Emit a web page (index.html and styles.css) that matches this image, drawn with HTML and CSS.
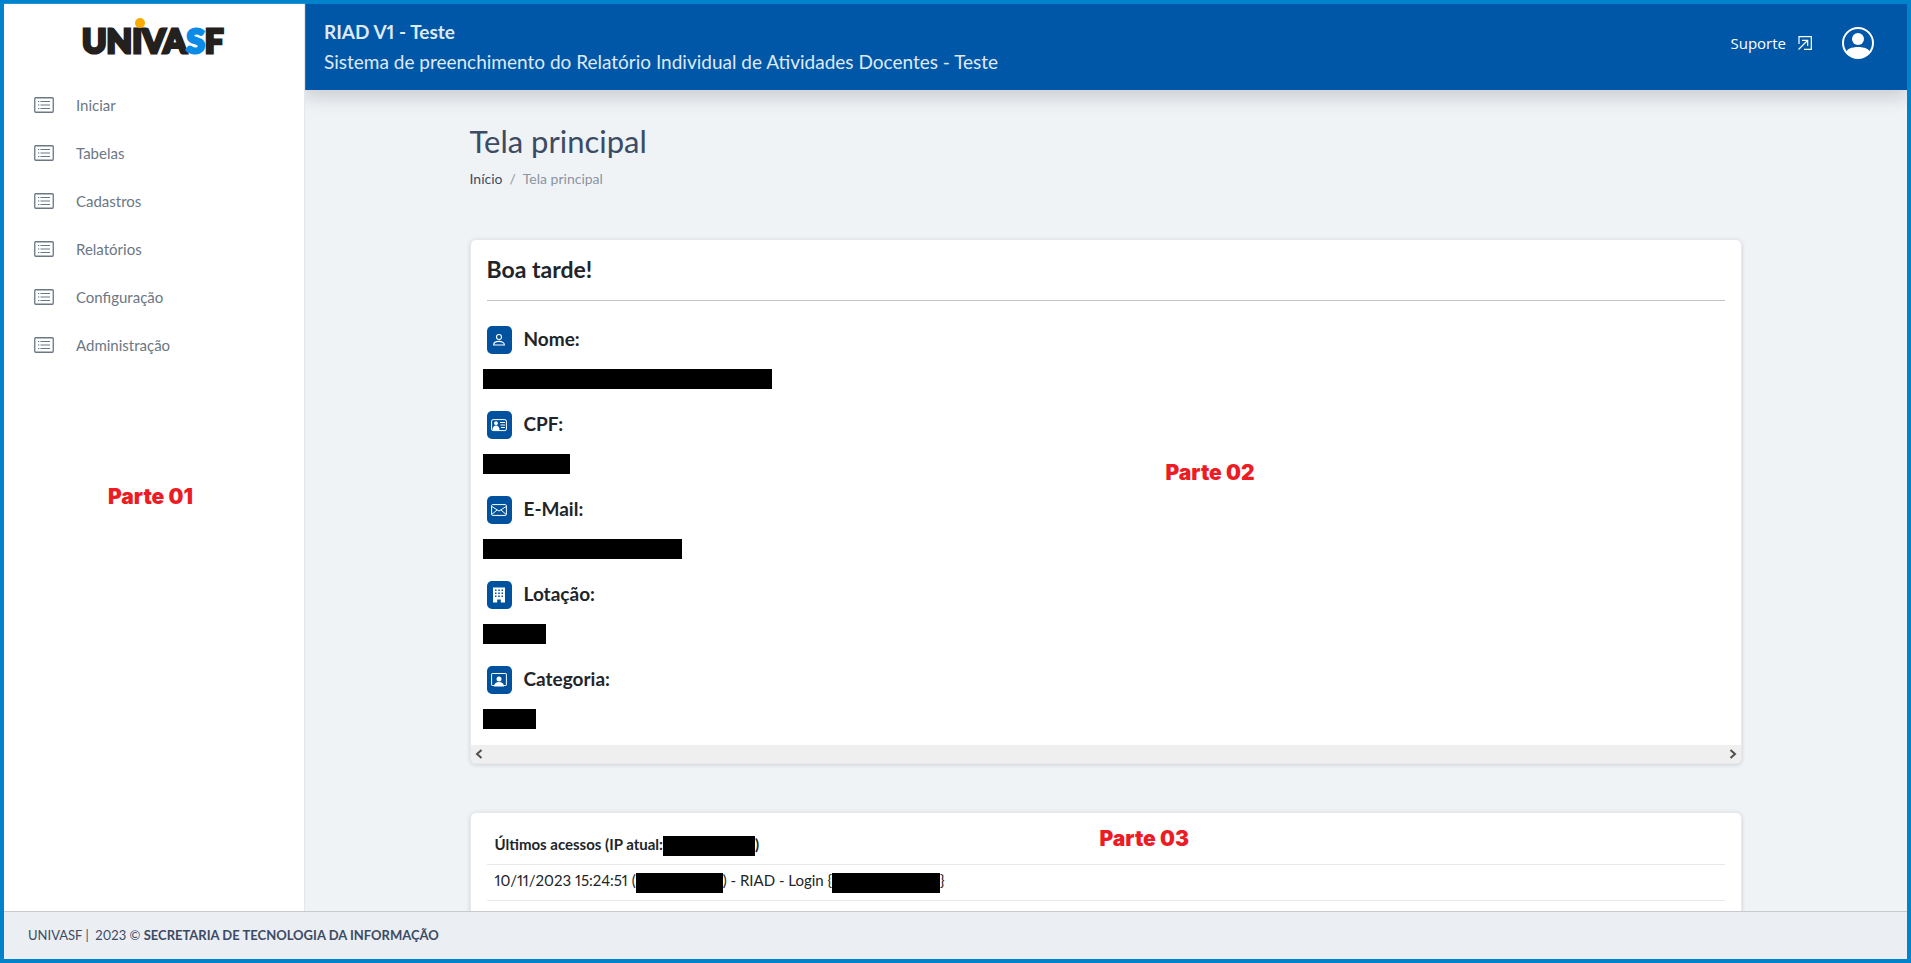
FILE: index.html
```html
<!DOCTYPE html>
<html lang="pt-BR">
<head>
<meta charset="utf-8">
<title>RIAD V1 - Teste</title>
<meta name="viewport" content="width=device-width, initial-scale=1">
<link rel="stylesheet" href="styles.css">
</head>
<body>
<svg class="defs" aria-hidden="true">
  <symbol id="i-list" viewBox="0 0 20 16">
    <rect x=".75" y=".75" width="18.5" height="14.5" rx="1" fill="none" stroke="currentColor" stroke-width="1.3"/>
    <path d="M4 4.5h1.3M4 8h1.3M4 11.5h1.3M6.5 4.5H16M6.5 8H16M6.5 11.5H16" stroke="currentColor" stroke-width="1.1"/>
  </symbol>
</svg>
<div class="app">
  <aside class="sidebar">
    <a class="brand" href="#" aria-label="UNIVASF">
      <svg width="146" height="40" viewBox="0 0 146 40">
        <text class="brand-text" x="1" y="35">UNIVA<tspan class="brand-s">S</tspan>F</text>
        <circle cx="59" cy="5" r="5" fill="#fbab00"/>
      </svg>
    </a>
    <nav class="menu">
      <a href="#"><svg class="menu-icon"><use href="#i-list"/></svg>Iniciar</a>
      <a href="#"><svg class="menu-icon"><use href="#i-list"/></svg>Tabelas</a>
      <a href="#"><svg class="menu-icon"><use href="#i-list"/></svg>Cadastros</a>
      <a href="#"><svg class="menu-icon"><use href="#i-list"/></svg>Relatórios</a>
      <a href="#"><svg class="menu-icon"><use href="#i-list"/></svg>Configuração</a>
      <a href="#"><svg class="menu-icon"><use href="#i-list"/></svg>Administração</a>
    </nav>
    <span class="note note-1">Parte 01</span>
  </aside>

  <div class="page">
    <header class="topbar">
      <div class="topbar-title">
        <strong>RIAD V1 - Teste</strong>
        <span>Sistema de preenchimento do Relatório Individual de Atividades Docentes - Teste</span>
      </div>
      <div class="topbar-actions">
        <a class="support" href="#">Suporte
          <svg width="14" height="14" viewBox="0 0 14 14" fill="none" stroke="currentColor" stroke-width="1.2"><path d="M1 8V.7h12.3v12.6H6M.5 13.5l9-9M4 4.3h5.7V10"/></svg>
        </a>
        <button class="avatar" type="button" aria-label="Perfil">
          <svg width="32" height="32" viewBox="0 0 32 32"><defs><clipPath id="face"><circle cx="16" cy="16" r="15"/></clipPath></defs><circle cx="16" cy="16" r="15" fill="none" stroke="#fff" stroke-width="2"/><circle cx="16" cy="12" r="6" fill="#fff"/><path clip-path="url(#face)" d="M4 26c0-4 6-6 12-6s12 2 12 6v6H4z" fill="#fff"/></svg>
        </button>
      </div>
    </header>

    <main class="content">
      <h1>Tela principal</h1>
      <nav class="crumbs" aria-label="Trilha"><a href="#">Início</a><span>/</span><span>Tela principal</span></nav>

      <section class="card profile">
        <div class="profile-body">
          <h2>Boa tarde!</h2>
          <dl>
            <div class="field">
              <dt><span class="badge"><svg viewBox="0 0 16 16" fill="none" stroke="currentColor" stroke-width="1.1"><circle cx="8" cy="5" r="2.5"/><path d="M2.6 13c0-2.2 2.2-3.6 5.4-3.6s5.4 1.4 5.4 3.6z"/></svg></span>Nome:</dt>
              <dd><span class="redacted w-name"></span></dd>
            </div>
            <div class="field">
              <dt><span class="badge"><svg viewBox="0 0 16 16" fill="none" stroke="currentColor"><rect x=".6" y="2.6" width="14.8" height="11" rx="1.5"/><circle cx="5" cy="6.2" r="1.9" fill="currentColor" stroke="none"/><path d="M1.5 13c0-3 1.5-4.5 3.5-4.500S8.500 10 8.500 13z" fill="currentColor" stroke="none"/><path d="M9 5.500h5M9.500 8h4.500M10 10.500h4"/></svg></span>CPF:</dt>
              <dd><span class="redacted w-cpf"></span></dd>
            </div>
            <div class="field">
              <dt><span class="badge"><svg viewBox="0 0 16 16" fill="none" stroke="currentColor"><rect x=".6" y="2.6" width="14.8" height="10.8" rx="1"/><path d="M.8 4.500 8 9l7.200-4.500M.8 12.500 6 8M15.200 12.500 10 8"/></svg></span>E-Mail:</dt>
              <dd><span class="redacted w-mail"></span></dd>
            </div>
            <div class="field">
              <dt><span class="badge"><svg viewBox="0 0 16 16"><path fill="currentColor" fill-rule="evenodd" d="M2 .5h12v15h-4.200v-3H6.200v3H2zM4 2.500v1.500h1.500V2.500zM7.200 2.500v1.500h1.600V2.500zM10.500 2.500v1.500H12V2.500zM4 5.500v1.500h1.500V5.500zM7.200 5.500v1.500h1.600V5.500zM10.500 5.500v1.500H12V5.500zM4 8.500v1.500h1.500V8.500zM7.200 8.500v1.500h1.600V8.500zM10.500 8.500v1.500H12V8.500z"/></svg></span>Lotação:</dt>
              <dd><span class="redacted w-unit"></span></dd>
            </div>
            <div class="field">
              <dt><span class="badge"><svg viewBox="0 0 16 16" fill="none" stroke="currentColor"><path d="M3.500 13.500H1.200a.6.6 0 0 1-.6-.6V2.100a.6.6 0 0 1 .6-.6h13.600a.6.6 0 0 1 .6.6v10.800a.6.6 0 0 1-.6.6h-2.300"/><circle cx="8" cy="7" r="2.500" fill="currentColor" stroke="none"/><path d="M3 14.500c0-3 2-4.500 5-4.500s5 1.500 5 4.500z" fill="currentColor" stroke="none"/></svg></span>Categoria:</dt>
              <dd><span class="redacted w-category"></span></dd>
            </div>
          </dl>
        </div>
        <div class="scroller">
          <button type="button" aria-label="Rolar à esquerda"><svg width="8" height="10" viewBox="0 0 8 10"><path d="M6.500 1 2 5l4.500 4" fill="none" stroke="#505050" stroke-width="2"/></svg></button>
          <button type="button" aria-label="Rolar à direita"><svg width="8" height="10" viewBox="0 0 8 10"><path d="M1.500 1 6 5 1.500 9" fill="none" stroke="#505050" stroke-width="2"/></svg></button>
        </div>
        <span class="note note-2">Parte 02</span>
      </section>

      <section class="card access">
        <table>
          <thead><tr><th scope="col">Últimos acessos (IP atual:<span class="redacted w-ip"></span>)</th></tr></thead>
          <tbody>
            <tr><td>10/11/2023 15:24:51 (<span class="redacted w-origin"></span>) - RIAD - Login {<span class="redacted w-login"></span>}</td></tr>
            <tr><td></td></tr>
          </tbody>
        </table>
        <span class="note note-3">Parte 03</span>
      </section>
    </main>
  </div>

  <footer class="footer">UNIVASF |&nbsp; 2023 © <strong>SECRETARIA DE TECNOLOGIA DA INFORMAÇÃO</strong></footer>
</div>
</body>
</html>
```
FILE: styles.css
```css
* { box-sizing: border-box; }

body {
  margin: 0;
  font-family: Lato, "Open Sans", sans-serif;
  font-size: 15px;
  font-variant-numeric: proportional-nums;
  color: #212529;
}

a { color: inherit; text-decoration: none; }
button { padding: 0; border: 0; background: none; cursor: pointer; }
svg { display: block; flex: none; }
.defs { position: absolute; width: 0; height: 0; }

.app {
  height: 100vh;
  display: grid;
  grid-template: minmax(0, 1fr) auto / 300px minmax(0, 1fr);
  border: 4px solid #0083cb;
  background: #eff3f6;
}

/* Sidebar */
.sidebar {
  position: relative;
  z-index: 2;
  background: #fff;
  box-shadow: 1px 0 1px #e4e7ec;
}
.brand {
  display: flex;
  justify-content: center;
  height: 77px;
  padding-top: 14px;
}
.brand svg { overflow: visible; }
.brand-text {
  font: 900 33px Lato, sans-serif;
  fill: #24201d;
  stroke: #24201d;
  stroke-width: 3;
}
.brand-s { fill: #0b8be6; stroke: #0b8be6; }
.menu a {
  display: flex;
  align-items: center;
  gap: 22px;
  height: 48px;
  padding-left: 30px;
  color: #6b7785;
}
.menu-icon { width: 20px; height: 16px; }

/* Header */
.page {
  display: flex;
  flex-direction: column;
  min-height: 0;
  overflow: hidden;
}
.topbar {
  position: relative;
  z-index: 1;
  display: flex;
  flex: none;
  align-items: flex-start;
  justify-content: space-between;
  padding: 13px 33px 13px 20px;
  background: #0057a8;
  color: #dfe9f4;
  box-shadow: 0 8px 16px rgba(0, 0, 21, .15);
}
.topbar-title { font-size: 19px; line-height: 30px; }
.topbar-title strong, .topbar-title span { display: block; }
.topbar-actions {
  display: flex;
  align-items: center;
  gap: 30px;
  padding-top: 10px;
  color: #fff;
}
.support { display: flex; align-items: center; gap: 12px; font: 15px "Open Sans", sans-serif; }
.avatar { width: 32px; height: 32px; }

/* Content */
.content {
  flex: 1;
  min-height: 0;
  overflow: auto;
  scrollbar-width: none;
  width: 100%;
  max-width: 1320px;
  margin: 0 auto;
  padding: 32px 24px;
}
h1 {
  margin: 0;
  font-size: 31px;
  font-weight: 400;
  line-height: 38px;
  color: #3c4b64;
}
.crumbs {
  display: flex;
  gap: 7px;
  margin: 8px 0 49px;
  font-size: 14px;
  line-height: 22px;
  color: #8a93a2;
}
.crumbs a { color: #3c4b64; }
.card {
  position: relative;
  margin-bottom: 48px;
  border: 1px solid #e6e8ec;
  border-radius: 6px;
  background: #fff;
  box-shadow: 0 1px 4px rgba(0, 0, 21, .14);
}
.profile-body { padding: 13px 16px 0; }
h2 {
  margin: 0 0 25px;
  padding-bottom: 15px;
  border-bottom: 1px solid #c4c4c6;
  font-size: 23px;
  font-weight: 700;
  line-height: 32px;
}
dl { margin: 0; }
.field { height: 85px; }
.field:last-child { height: 79px; }
dt {
  display: flex;
  gap: 12px;
  font-size: 19px;
  font-weight: 700;
  line-height: 26px;
}
.badge {
  display: grid;
  place-items: center;
  width: 25px;
  height: 28px;
  border-radius: 5px;
  background: #00529f;
  color: #fff;
}
.badge svg { width: 16px; height: 16px; }
dd { margin: 13px 0 0 -4px; line-height: 20px; }
.redacted { display: inline-block; height: 20px; background: #000; vertical-align: middle; }
.w-name { width: 289px; }
.w-cpf { width: 87px; }
.w-mail { width: 199px; }
.w-unit { width: 63px; }
.w-category { width: 53px; }
.w-ip { width: 92px; }
.w-origin { width: 87px; }
.w-login { width: 108px; }
.scroller {
  display: flex;
  align-items: center;
  justify-content: space-between;
  height: 18px;
  padding: 0 4px;
  border-radius: 0 0 5px 5px;
  background: #efefef;
}

/* Access log */
.access { padding: 15px 16px; }
table { width: 100%; border-collapse: collapse; }
th, td {
  height: 36px;
  padding: 0 8px;
  border-bottom: 1px solid #e8e9eb;
  text-align: left;
}

/* Region labels */
.note {
  position: absolute;
  font: 900 21px/20px Inter, sans-serif;
  color: #ed1c24;
}
.note-1 { left: 104px; top: 483px; }
.note-2 { left: 695px; top: 223px; }
.note-3 { left: 629px; top: 16px; }

.footer {
  position: relative;
  z-index: 3;
  grid-column: 1 / -1;
  padding: 0 24px;
  border-top: 1px solid #c8cacd;
  background: #ebeef3;
  font-size: 13px;
  line-height: 47px;
  color: #3c4b64;
}
```
